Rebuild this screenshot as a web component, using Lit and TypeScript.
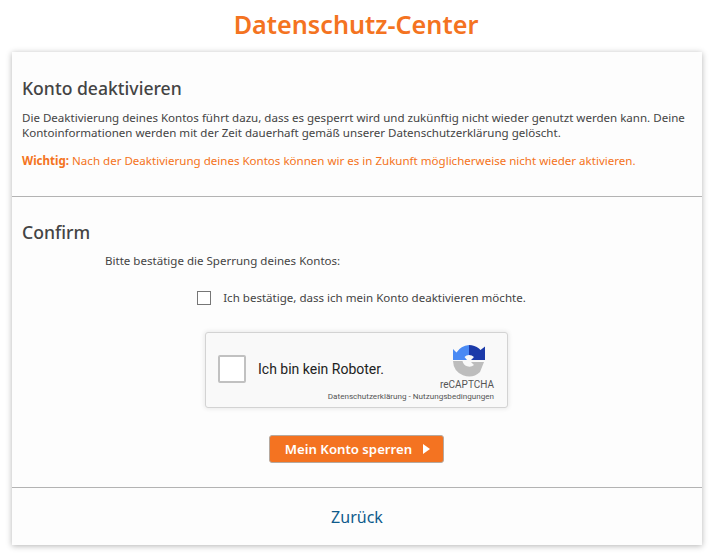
import { LitElement, html, css } from "lit";
import { customElement } from "lit/decorators.js";

@customElement("app-root")
export class AppRoot extends LitElement {
  static styles = css`
    :host { display: block; width: 712px; height: 559px; background: #fff; font-family: "Noto Sans", "Open Sans", sans-serif; color: #444; overflow: hidden; }
    h1 { margin: 0; height: 52px; box-sizing: border-box; padding-top: 7px; text-align: center; font-size: 25.2px; line-height: 35px; font-weight: 600; color: #f47321; }
    .card { margin: 0 10px 0 12px; height: 493px; background: #fdfdfd; box-shadow: 0 1px 6px rgba(0,0,0,.3); display: flex; flex-direction: column; }
    .sec1 { flex: none; height: 145px; box-sizing: border-box; padding: 24px 10px 0; border-bottom: 1px solid #b3b3b3; }
    h2 { margin: 0; font-size: 17.6px; line-height: 24px; font-weight: 500; color: #444; }
    p { margin: 0; font-size: 11.55px; line-height: 15px; }
    .sec1 p { margin-top: 10px; }
    .sec1 p.warn { margin-top: 13px; color: #f47321; }
    .sec2 { flex: none; height: 291px; box-sizing: border-box; padding: 23px 11px 0 10px; border-bottom: 1px solid #b3b3b3; }
    .ask { margin: 9px 0 0 83px; }
    .check { margin-top: 22px; display: flex; justify-content: center; align-items: center; gap: 12px; font-size: 11.55px; line-height: 15px; padding-left: 10px; }
    .box { width: 12px; height: 12px; border: 1px solid #767676; background: #fff; flex: none; }
    .rc { box-sizing: border-box; width: 303px; height: 76px; margin: 27px auto 0; position: relative; background: #f9f9f9; border: 1px solid #d3d3d3; border-radius: 3px; box-shadow: 0 0 4px 1px rgba(0,0,0,.08); display: flex; align-items: center; font-family: Roboto, sans-serif; color: #000; }
    .rcbox { width: 24px; height: 24px; margin: -2px 0 0 12px; border: 2px solid #c1c1c1; border-radius: 2px; background: #fff; flex: none; }
    .rclabel { margin: -2px 0 0 12px; font-size: 14px; line-height: 17px; flex: 1; color: #222; }
    .logo { width: 70px; margin-right: 5px; display: flex; flex-direction: column; align-items: center; }
    .logo svg { display: block; margin: -5px 0 0 4px; }
    .rcname { font-size: 10px; line-height: 12px; color: #555; margin-top: 2px; }
    .terms { position: absolute; right: 13px; bottom: 6px; font-size: 8.1px; line-height: 10px; color: #555; white-space: nowrap; }
    .btnrow { margin-top: 27px; display: flex; justify-content: center; }
    .btn { box-sizing: border-box; width: 175px; height: 28px; border: 1px solid #b5a99f; border-radius: 3px; background: #f47321; color: #fff; font: 600 13.2px/26px "Noto Sans", sans-serif; display: flex; align-items: center; justify-content: center; gap: 11px; padding: 0 0 0 2px; }
    .tri { width: 0; height: 0; border-left: 7px solid #fff; border-top: 5px solid transparent; border-bottom: 5px solid transparent; }
    .back { flex: 1; text-align: center; font-size: 16px; line-height: 55px; padding-top: 2px; color: #0f5b8c; text-decoration: none; }
  `;

  render() {
    return html`
      <h1>Datenschutz-Center</h1>
      <div class="card">
        <section class="sec1">
          <h2>Konto deaktivieren</h2>
          <p>Die Deaktivierung deines Kontos führt dazu, dass es gesperrt wird und zukünftig nicht wieder genutzt werden kann. Deine Kontoinformationen werden mit der Zeit dauerhaft gemäß unserer Datenschutzerklärung gelöscht.</p>
          <p class="warn"><b>Wichtig:</b> Nach der Deaktivierung deines Kontos können wir es in Zukunft möglicherweise nicht wieder aktivieren.</p>
        </section>
        <section class="sec2">
          <h2>Confirm</h2>
          <p class="ask">Bitte bestätige die Sperrung deines Kontos:</p>
          <div class="check"><span class="box"></span><span>Ich bestätige, dass ich mein Konto deaktivieren möchte.</span></div>
          <div class="rc">
            <span class="rcbox"></span>
            <span class="rclabel">Ich bin kein Roboter.</span>
            <div class="logo">
              <svg width="32" height="32" viewBox="0 0 32 32">
                <path d="M16 0v10a6.500 6.500 0 0 0-4.500 2l2.500 3H0V4l3.500 3.500A16 16 0 0 1 16 0z" fill="#4a8af4"/>
                <path d="M16 0a16 16 0 0 1 10 3.500l1.500 1.500L32 1.500V15H18l3-3a7 7 0 0 0-5-2z" fill="#1c3aa9"/>
                <path d="M0 16h9.500a7 7 0 0 0 11.500 4l-3-3h13l-4 10a16 16 0 0 1-27-11z" fill="#bdbdbd"/>
              </svg>
              <span class="rcname">reCAPTCHA</span>
            </div>
            <span class="terms">Datenschutzerklärung - Nutzungsbedingungen</span>
          </div>
          <div class="btnrow"><button class="btn">Mein Konto sperren <span class="tri"></span></button></div>
        </section>
        <a class="back" href="#">Zurück</a>
      </div>
    `;
  }
}
